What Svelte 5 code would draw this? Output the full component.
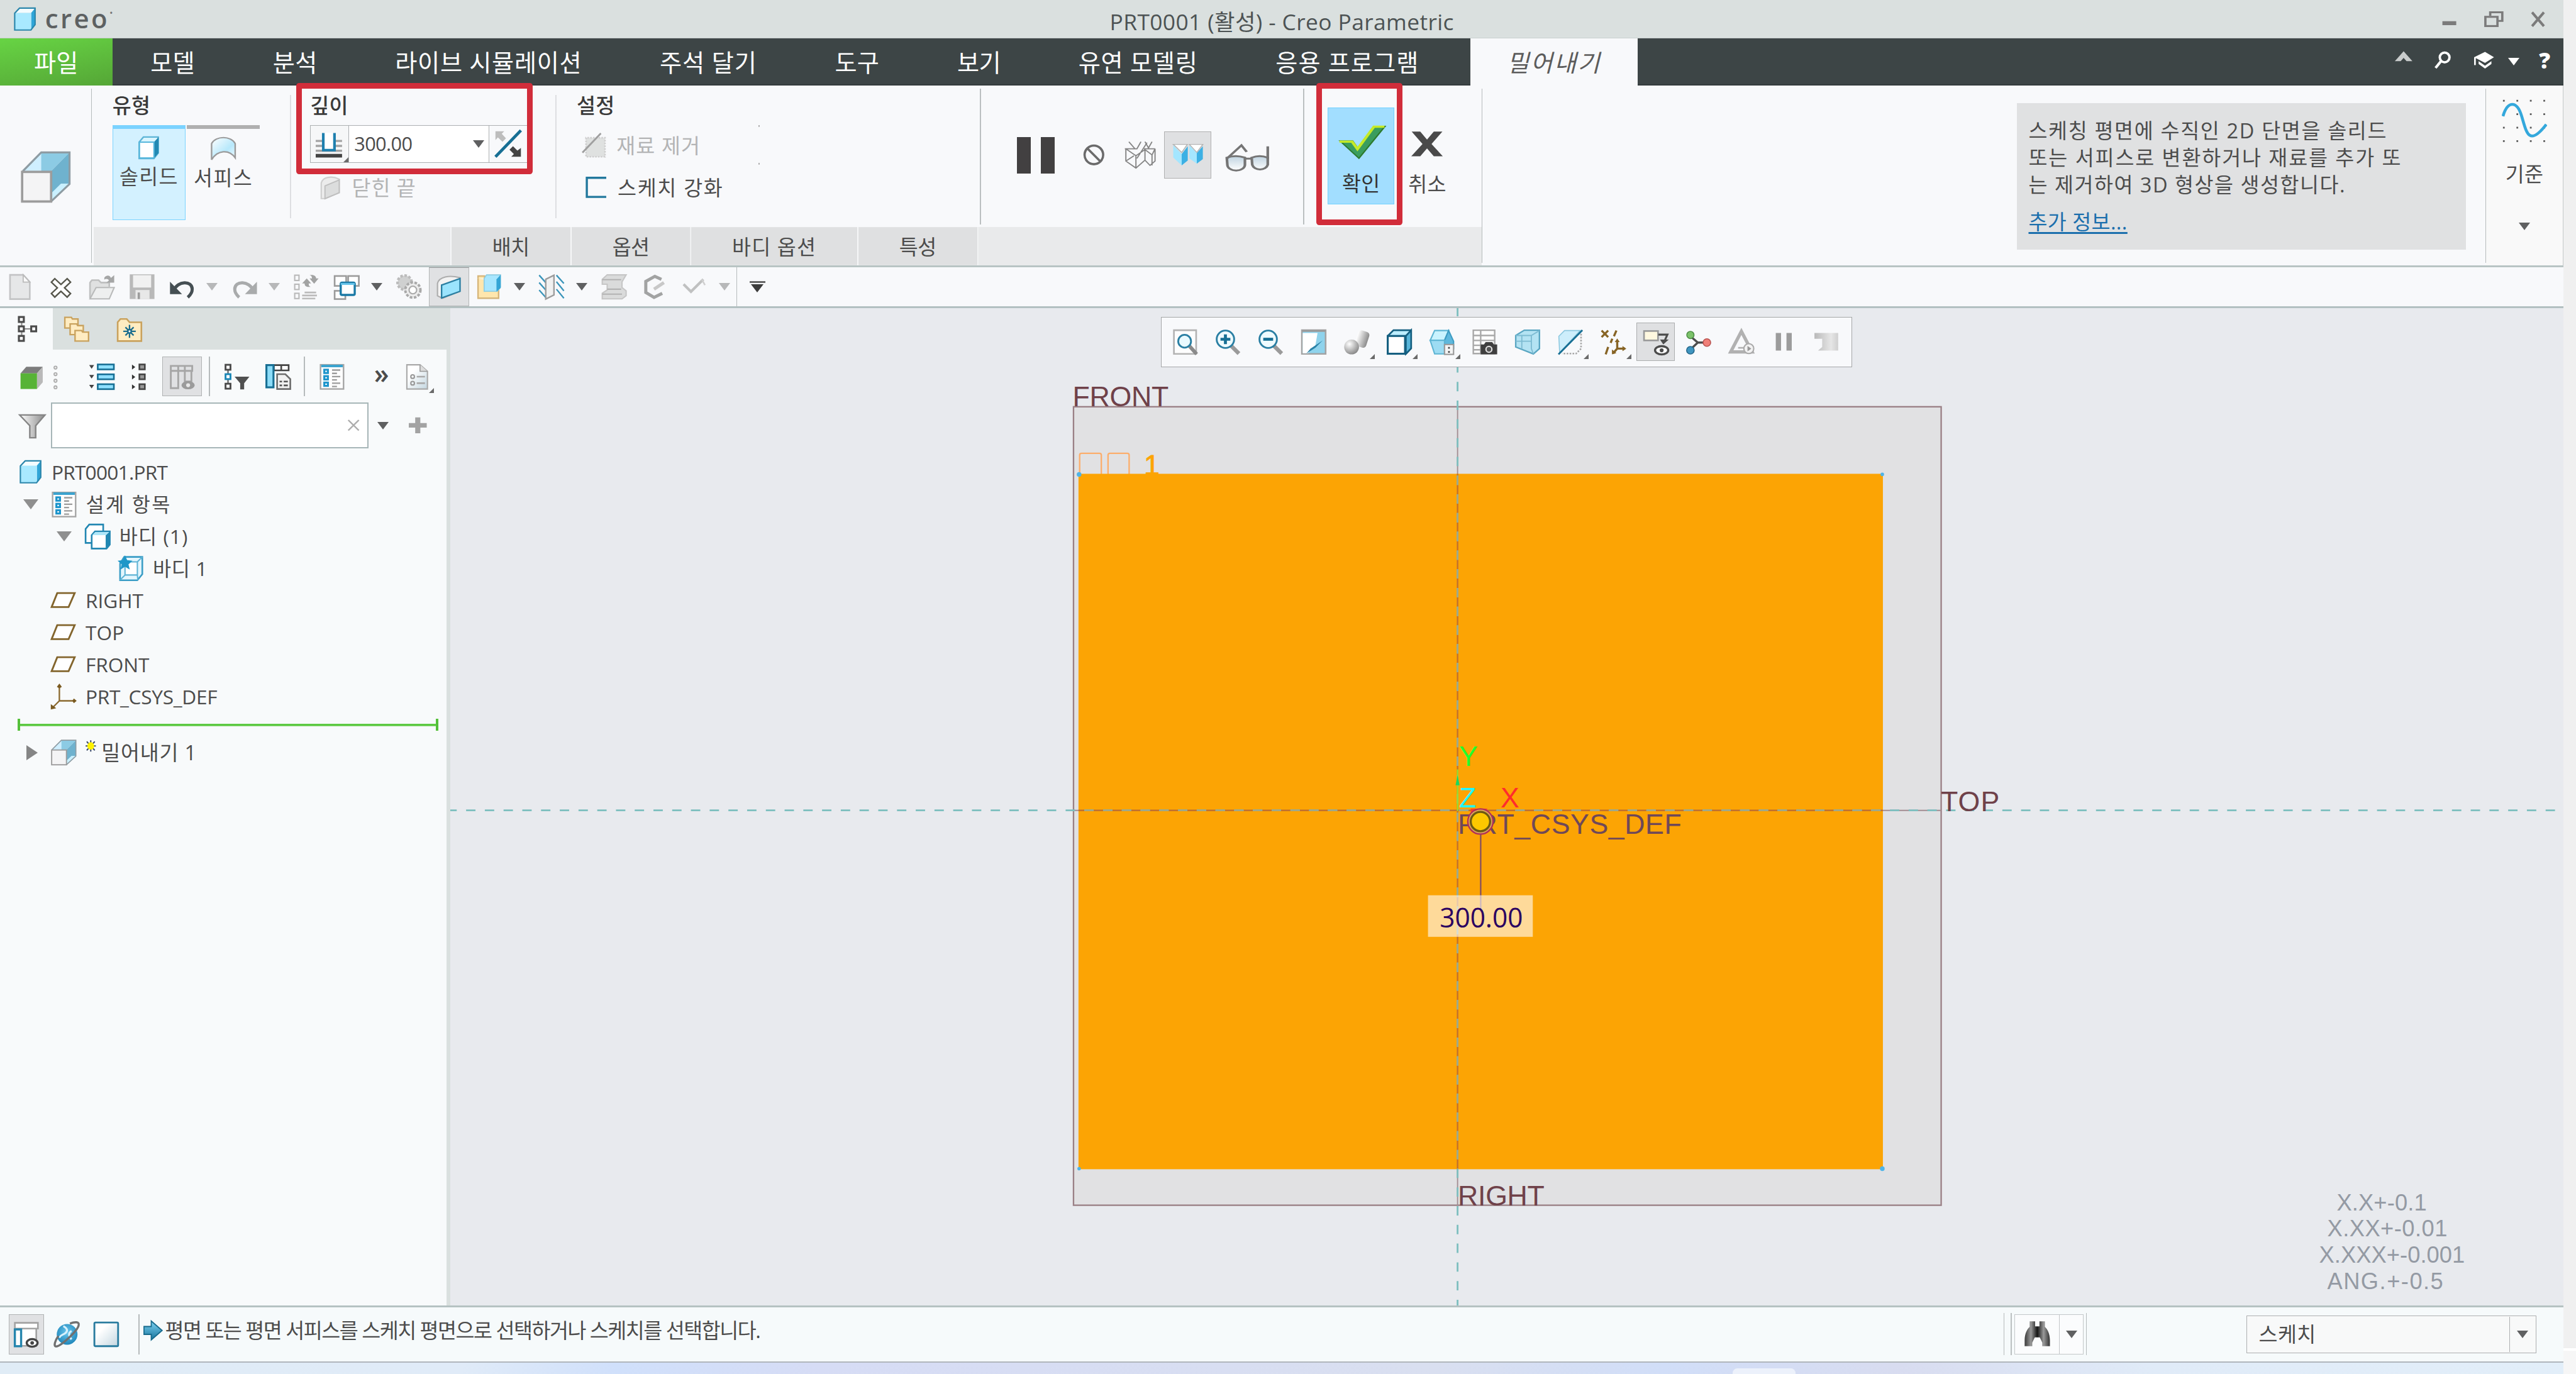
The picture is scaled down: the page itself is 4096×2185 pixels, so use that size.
<script>
  const BASE_WIDTH = 4400;

  function fit(node, width) {
    const root = node.closest('.app');
    const scale = root.getBoundingClientRect().width / BASE_WIDTH;
    const natural = node.getBoundingClientRect().width / scale;
    const count = [...node.textContent].length;
    node.style.letterSpacing = (width - natural) / count + 'px';
  }

  const menus = [
    { t: '모델', w: 76 },
    { t: '분석', w: 76 },
    { t: '라이브 시뮬레이션', w: 319 },
    { t: '주석 달기', w: 166 },
    { t: '도구', w: 76 },
    { t: '보기', w: 74 },
    { t: '유연 모델링', w: 204 },
    { t: '응용 프로그램', w: 245 }
  ];

  const panelTabs = [
    { t: '배치', c: 'tab', w: 63 },
    { t: '옵션', c: 'tab', w: 63 },
    { t: '바디 옵션', c: 'tab wide', w: 144 },
    { t: '특성', c: 'tab', w: 63 }
  ];

  const quick = [
    'newdoc', 'xclose', 'open', 'save', 'undo', '-off', 'redo', '-off', 'regen', 'windows', '-on',
    'gears', '*shade', 'foldercube', '-on', 'planes', '-on', 'book', 'hexc', 'tick', '-off'
  ];

  const viewTools = [
    { i: 'refit' }, { i: 'zoomin' }, { i: 'zoomout' }, { i: 'repaint' },
    { i: 'render', m: true }, { i: 'style', m: true }, { i: 'orient', m: true },
    { i: 'camera' }, { i: 'persp' }, { i: 'section', m: true }, { i: 'datum', m: true },
    { i: 'annot', on: true }, { i: 'spin' }, { i: 'simtri' }, { i: 'pausegray' }, { i: 'playback' }
  ];

  const tree = [
    { t: 'PRT0001.PRT', icon: 'part', level: 0, w: 198 },
    { t: '설계 항목', icon: 'list', level: 1, open: true, w: 146 },
    { t: '바디 (1)', icon: 'bodies', level: 2, open: true, w: 118 },
    { t: '바디 1', icon: 'body', level: 3, w: 94 },
    { t: 'RIGHT', icon: 'plane', level: 1, w: 99 },
    { t: 'TOP', icon: 'plane', level: 1, w: 66 },
    { t: 'FRONT', icon: 'plane', level: 1, w: 109 },
    { t: 'PRT_CSYS_DEF', icon: 'csys', level: 1, w: 225 }
  ];

  const help = [
    { t: '스케칭 평면에 수직인 2D 단면을 솔리드', w: 613 },
    { t: '또는 서피스로 변환하거나 재료를 추가 또', w: 638 },
    { t: '는 제거하여 3D 형상을 생성합니다.', w: 542 }
  ];

  const squares = (x, c, f) => [1, 6.5, 12].map((y) => `<rect x="${x}" y="${y}" width="2.6" height="3.2" fill="${f}" stroke="${c}" stroke-width=".8"/>`).join('');

  const icons = {
    part: '<path d="M1.5 4 4.5.8h10L12 4z" fill="#f3fcff"/><path d="M12 4 14.6.8v11L12 15.2z" fill="#2fa5d8"/><rect x="1.2" y="4" width="10.8" height="11.2" fill="#a9e9ff"/><path d="M1 4.2 4.2.8h10.4v11l-2.8 3.6H1z" fill="none" stroke="#2b86ab" stroke-width=".9"/>',
    extrude: '<path d="M1 6.4 6.6.8h8.6L9.6 6.4z" fill="#8ccbe4"/><path d="M1 6.4 6.6.8v5.6z" fill="#cfefff"/><path d="M9.6 6.4 15.2.8v9.4L9.6 15.4z" fill="#6fb2ce"/><path d="M9.6 15.4V13l3-2.9h2.6z" fill="#c9f0ff"/><path d="M1 6.4 6.6.8h8.6v9.4l-5.6 5.2" fill="none" stroke="#8e9ca3" stroke-width=".6"/><rect x=".8" y="6.6" width="8.8" height="8.8" fill="#f4f4f5" stroke="#9c9c9c" stroke-width=".7"/>',
    solid: '<path d="M2 4.6 4.6 1.5h9v9.7L11 14.5H2z" fill="#d9f5ff" stroke="#5cb4d6" stroke-width=".9"/><path d="M11 4.6 13.8 1.5v9.7L11 14.4z" fill="#2289b3"/><rect x="2.2" y="4.6" width="8.8" height="9.6" fill="#fff" stroke="#58b8dd" stroke-width=".8"/>',
    surface: '<path d="M1.8 5C4 .2 12 .2 14.2 5v8.4C11 8.4 5 8.6 1.8 14.6z" fill="url(#gBlue)" stroke="#9a9a9a" stroke-width=".8"/>',
    blind: '<path d="M0 5h16M0 8h16M0 11h16" stroke="#a4a4a4" stroke-width="1.3"/><rect x="4.5" y="0" width="7" height="10.5" fill="#fff"/><path d="M4.6.2v10.4h6.8V.2" fill="none" stroke="#1e7fae" stroke-width="1.6"/><path d="M0 14h16" stroke="#434343" stroke-width="2.2"/>',
    flip: '<path d="M15.5.5 1 15.5" stroke="#176f94" stroke-width="1.7"/><path d="M1 1h5L4.6 2.4 7 5 5 7 2.400 4.500 1 6z" fill="#bdbdbd"/><path d="M15.500 15.500h-5.500l1.500-1.500L9 11.500l2-2 2.500 2.500 2-1.500z" fill="#444"/>',
    capped: '<path d="M2 5C3 1 9 0 14 2.500v9L4.500 15.400H2z" fill="#ececec" stroke="#cfcfcf" stroke-width=".9"/><path d="M4.500 7 14 3v8.500l-9.500 4z" fill="#dcdddd" stroke="#bfbfbf" stroke-width=".8"/>',
    remove: '<path d="M3 3.500V15h11.500V3.500z" fill="#dfe1e0" stroke="#cfcfcf" stroke-dasharray="1 .7"/><path d="M.8 12.500 12 .8" stroke="#9f9f9f" stroke-width="1.1"/>',
    thicken: '<path d="M14.500 2.200H2.700v11.600h11.800" fill="none" stroke="#22789d" stroke-width="1.3"/>',
    no: '<circle cx="8" cy="8" r="5.300" fill="none" stroke="#6b6b6b" stroke-width="1.300"/><path d="m4.300 4.300 7.400 7.400" stroke="#6b6b6b" stroke-width="1.300"/>',
    wire: '<g fill="none" stroke="#858585" stroke-width=".6"><path d="M.5 4.500h6l2-4M10 4.500h5.500M1 4.500v7l5 4 4.500-4.500V5L6 8.500 1 4.500M6 8.500v7M10.500 5 14 8l1.500-3.500v7L13 14l-2.500-3M14 8v6M2.500.5l3 4M10.500.5l2 4M14 .5l-2 4M6.500 10l5-9M1 11.500l4-3"/></g>',
    prev: '<path d="M.8 2h7L5 6.600z" fill="#fff" stroke="#b5b5b5" stroke-width=".5"/><path d="M8.800 2h6.700L12.500 6.600z" fill="#fff" stroke="#b5b5b5" stroke-width=".5"/><path d="M.8 2.500 5 7.500V14L.8 9.500z" fill="#a4e6ff"/><path d="M5 7.500 8 3v8.200L5 14z" fill="#3cb0e4"/><path d="M8.800 2.500 12.500 7v6L8.800 10z" fill="#a4e6ff"/><path d="M12.500 7 15.500 3v7.400l-3 2.600z" fill="#3cb0e4"/>',
    glasses: '<g fill="url(#gGlass)" stroke="#757575" stroke-width=".9"><path d="M1 8.500q3-1.500 6.200 0v3.500a3 2.800 0 0 1-6 0zM9.500 8.500q2.700-1.500 5.500 0v3.500a2.700 2.800 0 0 1-5.300 0z"/></g><path d="M1 9 6 2.500l1.800 3.200M7.300 9h2.200M15 9V3" fill="none" stroke="#757575" stroke-width=".9"/>',
    check: '<path d="M1 7.500h4.200L7 11 12.500.8H16L7.300 15.400z" fill="#3a9d5e" stroke="#2c7a2c" stroke-width=".5"/><path d="M.8 7.800h4.200l1.800 3.400L12.300 1h3.500" fill="none" stroke="#c5ea27" stroke-width="1"/>',
    cancel: '<path d="M.5.5h4.200L8 5.300 11.300.500h4.200L10.200 8l5.500 7.500h-4.400L8 10.700 4.700 15.500H.3L5.800 8z" fill="#4a4a4a"/>',
    newdoc: '<path d="M1.500.8h8l4 4.400v10.300h-12z" fill="#e6e7e8" stroke="#c3c4c5"/><path d="M9.500.8v4.400h4z" fill="#fafafa" stroke="#bbb" stroke-width=".7"/>',
    xclose: '<path d="m4.300 5.200 7.400 7M11.700 5.200l-7.400 7" stroke="#56564c" stroke-width="3.900" stroke-linecap="square"/><path d="m4.300 5.200 7.400 7M11.700 5.200l-7.400 7" stroke="#fff" stroke-width="2.100" stroke-linecap="square"/>',
    open: '<path d="M.8 15V5.500L2 4h4l1.500 1.500h5V8" fill="#e0e1e1" stroke="#bfc0c0"/><path d="M.8 15.400 4.500 8.500h11l-3 6.900z" fill="#eeefef" stroke="#b9baba" stroke-width=".8"/><path d="M9.500 2.500c1.500-2 3.500-1.500 4 .2L15.500 1v4.500h-4.800l1.600-1.300c-.6-1-1.800-1.200-2.800-.5z" fill="#a5a6a6"/>',
    save: '<path d="M.5.5h15v15h-15z" fill="#b9b9b9"/><path d="M2.500 1h11v7.500h-11z" fill="#f1f1f1"/><path d="M4 10h8.500v5.500H4z" fill="#e8e8e8"/><path d="M6 11.500v4" stroke="#9c9c9c" stroke-width="1.400"/>',
    undo: '<path d="M3 10c2-5.500 11-6 11-.5 0 2-1 3.500-2.700 5" fill="none" stroke="#454f53" stroke-width="1.900"/><path d="M.5 5v7.500h7.300z" fill="#454f53"/>',
    redo: '<path d="M13 10c-2-5.500-11-6-11-.5 0 2 1 3.500 2.700 5" fill="none" stroke="#a9abac" stroke-width="1.900"/><path d="M15.500 5v7.500H8.200z" fill="#a9abac"/>',
    regen: squares(1, '#b9b9b9', 'none') + '<path d="M7 11.500h7M5.500 13.300h9M5.500 15.200h8" stroke="#bbb"/><path d="M5.500 6 8.300 3l2.700 3H9.500c0 1.500.5 2 1.500 2-2.500.5-4-.2-4-2zM10 3h1.500c0-1.200-.5-1.800-1.500-2 2.500-.5 4 .5 4 2h1.500L12.800 6.200z" fill="#a2a3a3"/>',
    windows: '<g fill="#fff" stroke="#9b9b9b"><rect x=".8" y="1.500" width="7" height="6"/><rect x="9" y="1.500" width="6.500" height="6"/><rect x=".8" y="10.500" width="6.500" height="5"/></g><rect x="4.500" y="5.500" width="8.500" height="7.500" rx=".8" fill="#fff" stroke="#1b7aa6" stroke-width="1.300"/><path d="M4.500 6.300h8.500" stroke="#65c3ea" stroke-width="1.200"/>',
    gears: '<circle cx="5.500" cy="5.500" r="4.300" fill="#cfd0d0" stroke="#bbb" stroke-width="1.600" stroke-dasharray="1.500 1"/><circle cx="10.500" cy="10" r="4.600" fill="#ececec" stroke="#a9a9a9" stroke-width="1.500" stroke-dasharray="1.600 .9"/><circle cx="10.500" cy="10" r="2.300" fill="#fff" stroke="#aaa" stroke-width=".8"/>',
    shade: '<path d="M1 13.500V6C2 2 8 .8 14.500 2.500v8.300L4 15z" fill="#f2f2f2" stroke="#acacac" stroke-width=".8"/><path d="M3.500 7 14.700 3v7.800L3.500 14.800z" fill="#9be4fd" stroke="#2b7fa2" stroke-width=".9"/>',
    foldercube: '<path d="M.8 3V15h12.500V5" fill="#ffe6ad" stroke="#d6b57a" stroke-width=".9"/><path d="M.8 3V1.500h4V3" fill="#ffe6ad" stroke="#d6b57a" stroke-width=".9"/><path d="M4.500 3 6 .8h8.500v7.500l-2 2.500h-8z" fill="#a8e6fe" stroke="#8ccbe0" stroke-width=".6"/><path d="M12 3.500 14.500.8v8L12 11z" fill="#35a5d6"/>',
    planes: '<path d="m.5 1 4 4.500m-4 0 4 4.500m-4 0 4 4.500M11 1l4.500 5M11 5l4.500 5.500M11 9.500l4.500 5.500" stroke="#3b95ba" stroke-width=".9"/><path d="m4.500 3.500 5-2.500v12l-5 2.500z" fill="#f1f1f1" stroke="#9c9c9c" stroke-width=".9"/>',
    book: '<path d="M1 3.500 4 .8h11.500L13 5v3.500l2.500 2v3L13 15.400H1V12l3-2V6.500H1z" fill="#dadbdb" stroke="#c6c6c6" stroke-width=".8"/><path d="M1 3.700h11.500M4 9.500h8.500M1 12.500h12" stroke="#b2b2b2" stroke-width=".8"/>',
    hexc: '<path d="M12.500 3.500 8.500 1.700 3 4.800v6.700l5 3 5-2.500" fill="none" stroke="#a2a3a3" stroke-width="1.900"/><path d="m8 9.500 6-4" stroke="#c8c8c8" stroke-width="2"/>',
    tick: '<path d="M1.500 6.500 6 11l7.500-7.500" fill="none" stroke="#c0c1c1" stroke-width="1.600"/><path d="M12.500 3.500 14.500 7" stroke="#d0d0d0"/>',
    tabtree: '<path d="M4 3v10M4 8h6" stroke="#8a8a8a" stroke-width=".8"/><g fill="#fff" stroke="#4b4b4b" stroke-width="1.200"><rect x="2.300" y=".8" width="3" height="3"/><rect x="2.300" y="6.500" width="3" height="3"/><rect x="9.800" y="6.500" width="3" height="3"/><rect x="2.300" y="12.300" width="3" height="3"/></g>',
    folders: '<g fill="#ffecc2" stroke="#c9a25e" stroke-width=".9"><path d="M.8 1h4l.6 1h3.400v5.500h-8z"/><path d="M4 5h4l.6 1h3.400v5.500H4z"/><path d="M7 9h4l.6 1h3.600v5.400H7z"/></g>',
    favfolder: '<path d="M.8 4 2.500 2h3.800L8 4h7.200v11.400H.8z" fill="#ffecc2" stroke="#c9a25e"/><path d="M8 5.500v8M4.200 9.500h7.600M5.500 7l5 5M10.500 7l-5 5" stroke="#1d6d8d" stroke-width=".9"/><circle cx="8" cy="9.500" r="1.100" fill="#fff" stroke="#1d6d8d"/>',
    greencube: '<path d="M1 6 4.500 2h10L11 6z" fill="#7c7c7c"/><path d="M11 6 14.500 2v9.500L11 15.500z" fill="#b9b9b9"/><rect x="1" y="6" width="10" height="9.500" fill="#57b336"/>',
    dots: '<g fill="#e9e9e9" stroke="#a8a8a8" stroke-width=".6"><circle cx="2" cy="2.500" r=".9"/><circle cx="2" cy="6.500" r=".9"/><circle cx="2" cy="10.500" r=".9"/><circle cx="2" cy="14.500" r=".9"/></g>',
    expand: [1, 7, 13].map((y) => `<path d="M.3 ${y}h3L1.800 ${y + 2.2}z" fill="#454545"/><rect x="5.500" y="${y - 0.4}" width="9.800" height="3" fill="#8fe0ff" stroke="#176f94" stroke-width="1"/>`).join(''),
    collapse: [1, 7, 13].map((y) => `<path d="M3 ${y - 0.3}v3L5 ${y + 1.2}z" fill="#333"/><rect x="7.500" y="${y - 0.4}" width="3.300" height="3" fill="#989898" stroke="#444" stroke-width="1"/>`).join(''),
    coltoggle: '<path d="M1 1.500h13v3H1zM1 4.500h4.500V15H1zM5.500 4.500V12M9.500 1.500V11h4V4.500M5.500 1.500v3" fill="none" stroke="#a6a6a6" stroke-width="1.100"/><ellipse cx="11.500" cy="13.200" rx="4" ry="2.500" fill="#9b9b9b"/><circle cx="11.500" cy="13.200" r="1.200" fill="#e8e8e8"/>',
    treefilter: '<path d="M2.500 3v10" stroke="#777"/><g fill="#fff" stroke="#4b4b4b" stroke-width="1.100"><rect x="1" y=".8" width="3" height="3"/><rect x="1" y="6.500" width="3" height="3" stroke="#1a86b5"/><rect x="1" y="12.300" width="3" height="3"/></g><path d="M6.500 8h9l-3.200 4v3.800h-2.400V12z" fill="#505050"/>',
    treecols: '<path d="M1 1h13.500v3.200H1z" fill="#fff" stroke="#444"/><path d="M5.500 1v3M10 1v3" stroke="#444"/><rect x="1" y="1" width="4.300" height="13.500" fill="#8cdcf8" stroke="#176f94" stroke-width="1.200"/><path d="M7.500 6.500h5l3 3v6h-8z" fill="#f1f1f1" stroke="#6d6d6d"/><path d="M9 11h1.500m1 0H14M9 13.300h1.500m1 0H14" stroke="#555"/>',
    list: '<rect x="1" y=".8" width="14" height="14.700" fill="#fdfdfd" stroke="#a5a5a5" stroke-width=".9"/><path d="M1.500 1.500h13" stroke="#3ba3cf" stroke-width="1.500"/><g fill="#fff" stroke="#1d95cc" stroke-width="1.200"><rect x="3.300" y="3.800" width="2.200" height="2"/><rect x="3.300" y="7.700" width="2.200" height="2"/><rect x="3.300" y="11.600" width="2.200" height="2"/></g><path d="M8 4h5M8 6h3M8 8h5M8 10h3M8 12h5M8 14h3" stroke="#9c9c9c" stroke-width=".9"/>',
    docopts: '<path d="M1.500.8h8l4.500 4v10.700H1.500z" fill="url(#gDoc)" stroke="#a9a9a9" stroke-width=".8"/><path d="M9.500.8v4H14" fill="#ddd" stroke="#999" stroke-width=".6"/><path d="M7.500 8h5M7.500 12h5" stroke="#aaa"/><circle cx="5" cy="8" r="1.100" fill="none" stroke="#999" stroke-width=".8"/><circle cx="5" cy="12" r="1.100" fill="none" stroke="#999" stroke-width=".8"/>',
    funnel: '<path d="M.5 1.500h15L10 8v7.300H6.500V8z" fill="url(#gGray)" stroke="#858585" stroke-width=".9"/>',
    bodies: '<path d="M.8 3.500 3 .8h8.500V9L9.500 12H.8z" fill="#fff" stroke="#2287b2"/><path d="M4.500 7.300 6.500 5h9v8L13.500 15.400h-9z" fill="#fff" stroke="#2287b2"/><path d="M13 7.300 15.500 5v8L13 15.200z" fill="#2187b2"/><path d="M4.800 7.300 6.700 5.300h8.500l-2 2z" fill="#aee6f8"/>',
    body: '<path d="M1.500 5 4 1h11v10.500L12 15.200H1.500z" fill="#e3f6fd" stroke="#3a9dc6"/><path d="M4.500 4H12v8H4.500zM12 4l3-3M12 12l.3 3M4.500 12l-3 3" fill="#fff" stroke="#5fb4d5" stroke-width=".8"/><path d="m4.500 0 1.300 3 3.200.3-2.400 2.200.8 3.200-2.900-1.700-2.800 1.700.8-3.200L0 3.300 3.200 3z" fill="#1f97c8"/>',
    plane: '<path d="M4.200 3.500h10.600l-3.700 8.500H.8z" fill="#fff" stroke="#83652d" stroke-width="1.100"/>',
    csys: '<path d="M5.500 2v8.500H15M5.500 10.500 1.500 14.500" fill="none" stroke="#8b6a30" stroke-width=".9"/><path d="M5.500 0 7 2 5.500 3 4 2zM16 10.500l-1.700 1.400-.9-1.400.9-1.400zM.3 15.800v-3.300l3.300 2.500z" fill="#7a5a20"/>',
    refit: '<path d="M1 .8h13.500v14.400H1z" fill="#fdfdfd" stroke="#b3b3b3"/><path d="m10.500 10.500 4.300 4.800" stroke="#8a8a8a" stroke-width="2.200"/><circle cx="7.500" cy="7.500" r="3.900" fill="#eafaff" stroke="#2a7fa3" stroke-width="1.100"/>',
    zoomin: '<path d="m9.500 10 5 5" stroke="#9a9a9a" stroke-width="2.400"/><circle cx="6.300" cy="6.300" r="5.300" fill="#effbff" stroke="#2a7fa3" stroke-width="1.100"/><path d="M6.300 3.300v6M3.300 6.300h6" stroke="#176f94" stroke-width="1.800"/>',
    zoomout: '<path d="m9.500 10 5 5" stroke="#9a9a9a" stroke-width="2.400"/><circle cx="6.300" cy="6.300" r="5.300" fill="#effbff" stroke="#2a7fa3" stroke-width="1.100"/><path d="M3.300 6.300h6" stroke="#176f94" stroke-width="1.800"/>',
    repaint: '<path d="M.8.800h14.400v14.400H.8z" fill="#8fd3ec" stroke="#a4a4a4"/><path d="M1.300 2.500h9L9 10l-4.500 4.800H1.300z" fill="#fff"/><path d="M1 1.200h14" stroke="#9b9b9b" stroke-width="1.300"/><path d="M13.500 7 9 11.500 3.500 15l2.500-3z" fill="#2b83a8"/>',
    render: '<rect x="8" y="1" width="7" height="10" rx="2" fill="url(#gGray)" transform="rotate(18 11 6)"/><circle cx="5" cy="11" r="4.500" fill="url(#gBall)"/>',
    style: '<path d="M1 4.300 4.500.8h10.700v11L12 15.200H1z" fill="#bdeeff" stroke="#155f80"/><path d="M12 4.300 15.200.8v11L12 15.200z" fill="#57b5da" stroke="#155f80"/><rect x="1" y="4.300" width="10.500" height="10.800" fill="#fff" stroke="#155f80" stroke-width="1.200"/>',
    orient: '<path d="M3.500 1h8.500L9.500 7H.8z" fill="#c9f3ff" stroke="#5db4d3" stroke-width=".8"/><path d="M12 1l3 6.500V12H9.500V7z" fill="#5eb8dd" stroke="#3d9cc2" stroke-width=".8"/><path d="M.8 7h8.700v8.200H3.500z" fill="#9ddcf3" stroke="#5db4d3" stroke-width=".8"/><rect x="9.500" y="9.500" width="5.500" height="6" fill="#f4f4f4" stroke="#999" stroke-width=".8"/><path d="M12.200 11v1m0 1.500v1" stroke="#444"/>',
    camera: '<path d="M1 .8h13V15H1zM1 4h13M1 7h13M1 10h13M1 12.700h13M5.500 1v14" fill="#fdfdfd" stroke="#a8a8a8" stroke-width=".9"/><path d="M5.500 9.500h2l1-1.500h4l1 1.500h2v6h-10z" fill="#3f3f3f"/><circle cx="10.500" cy="12.400" r="1.800" fill="#555" stroke="#e3e3e3" stroke-width=".8"/>',
    persp: '<path d="M.8 4 6 .8h9.200V12L11.500 15.200.8 11z" fill="#b4e3f3" stroke="#5aa6c2" stroke-width=".9"/><path d="M.8 4h9.500v8M10.300 4l5-3M10.300 12l1.200 3.200M4.500 4v8.300M.8 7.500h9.500" fill="none" stroke="#7dbbd2" stroke-width=".7"/>',
    section: '<path d="M1 4.500 4.500 1H14L1.500 14.500z" fill="#cdeefb" stroke="#8cc8df" stroke-width=".6"/><path d="M14.500 3v9l-3 3H3" fill="none" stroke="#a8a8a8" stroke-dasharray="1 .8"/><path d="M.8 15.500 15.300.8" stroke="#176f94" stroke-width="1.100"/>',
    datum: '<g fill="none" stroke="#876425" stroke-width="1.300"><path d="m1 1 4 4M5 1 1 5M10 1 8.500 4.500M7.500 6l-1 2.500M5 11l-1.500 4.500M10.500 7v5h4.800M10.500 12 8 14.800"/></g><path d="M10.500 5.800 12 8H9zM16 12l-2.300 1.600v-3.200zM7.300 15.500v-3l2.700 2.200z" fill="#876425"/>',
    annot: '<rect x=".8" y="1.300" width="8.500" height="5.700" fill="#fff8df" stroke="#999"/><path d="M9.500 3.500h5.500L13 8" fill="none" stroke="#4c4c4c" stroke-width="1.200"/><path d="M10.500 6.500h5.300L12.500 9.500z" fill="#4c4c4c"/><ellipse cx="11.500" cy="13" rx="4" ry="2.500" fill="#fff" stroke="#4c4c4c" stroke-width="1.300"/><circle cx="11.500" cy="13" r="1.200" fill="#4c4c4c"/>',
    spin: '<path d="M3 4.500 7.500 8.300H13M7.500 8.300 3 12.500" fill="none" stroke="#4d4d4d" stroke-width="1.300"/><circle cx="3" cy="3.700" r="2.200" fill="#7cc26a" stroke="#4d8d45" stroke-width=".6"/><circle cx="13" cy="8.300" r="2.300" fill="#f08079" stroke="#b9524f" stroke-width=".6"/><circle cx="3" cy="13" r="2.300" fill="#3f95c0" stroke="#25678a" stroke-width=".6"/>',
    simtri: '<path d="M8 1.500 14.500 14H1.500z" fill="none" stroke="#b1b1b1" stroke-width="2"/><path d="M6 11.500h5" stroke="#b1b1b1"/><circle cx="12.500" cy="12" r="3" fill="#f2f2f2" stroke="#aaa" stroke-width=".8"/><path d="m11.700 10.300 2.300 1.700-2.300 1.700z" fill="#999"/>',
    pausegray: '<path d="M4.500 2.500v10.700M11 2.500v10.700" stroke="#9c9c9c" stroke-width="3.200"/>',
    playback: '<path d="M.8 2.500h14.400v10.700H3L5.500 11V6H.8z" fill="url(#gPlay)"/>',
    layout: '<path d="M1 1h14v3.500H1zM1 4.500h13v10.500H1z" fill="#fff" stroke="#a3a3a3"/><rect x="1" y="5" width="3.800" height="10.200" fill="#fff" stroke="#2585ad" stroke-width="1.300"/><ellipse cx="11.500" cy="13.200" rx="3.300" ry="2.300" fill="#fff" stroke="#444" stroke-width="1.300"/><circle cx="11.500" cy="13.200" r="1.100" fill="#444"/>',
    globe: '<circle cx="8.300" cy="8" r="6.300" fill="url(#gGlobe)"/><path d="M6 3c2 1 3 2.500 1.500 4S4.500 8 3.500 10M11 6c-2 1-2 3 0 5" fill="none" stroke="#d7f1fc" stroke-width="1.200"/><path d="M10 1.500C13 .2 16 .3 15.300 2.500 14.500 6 4 15.800 1.300 15.300.2 15 .8 12 3 9" fill="none" stroke="#707070" stroke-width="1.300"/>',
    square: '<rect x=".8" y=".8" width="14.400" height="14.400" rx=".6" fill="url(#gDoc)" stroke="#2a7c9f" stroke-width="1.100"/>',
    arrow: '<path d="M.5 5h6V.8L15.500 8 6.500 15.200V11h-6z" fill="url(#gArrow)" stroke="#176a8c" stroke-width=".9"/>',
    binoc: '<path d="M3.500.5h3.200v3h2.600v-3h3.200v3.200c1.500 1.300 3 4 3 8v3.500h-4.500v-2L9.500 10h-3L5 13.200v2H.5v-3.500c0-4 1.500-6.700 3-8z" fill="url(#gBin)"/>',
    up: '<path d="M.5 15.500 8 .5l7.500 15h-5L8 10.500l-2.500 5z" fill="#c9cccc"/>',
    search: '<circle cx="9.500" cy="5.700" r="4.300" fill="none" stroke="#fff" stroke-width="2.100"/><path d="M6.300 9 1.500 15" stroke="#fff" stroke-width="2.300"/>',
    hat: '<path d="M.5 5.500 9 .8l7 4.700-7 5zM4 9l5 4 5-4v2.500L9 15.500l-5-4zM.5 5.500h1.300v7H.5z" fill="#fff"/>',
    min: '<path d="M1 12h14" stroke="#7b7b7b" stroke-width="4"/>',
    restore: '<path d="M5 5V1.500h10V10h-3.500" fill="none" stroke="#7b7b7b" stroke-width="1.900"/><rect x="1" y="6" width="10" height="9" fill="none" stroke="#7b7b7b" stroke-width="1.900"/>',
    winx: '<path d="m2 1 12 14M14 1 2 15" stroke="#7b7b7b" stroke-width="2.600"/>',
    clearx: '<path d="m2 1.500 12 13M14 1.500l-12 13" stroke="#adadad" stroke-width="1.800"/>',
    plus: '<path d="M8 1v14M1 8h14" stroke="#a3a3a3" stroke-width="4"/>',
    newstar: '<path d="M8 1v14M1 8h14M2.500 2.500l11 11M13.500 2.500l-11 11" stroke="#3b4a63" stroke-width="1.700"/><circle cx="8" cy="8" r="4.600" fill="#fff200"/>'
  };

  const dotGrid = [0, 1, 2, 3].flatMap((r) => [0, 1, 2, 3].map((c) => ({ x: 2 + c * 23, y: 3 + r * 23 })));
</script>

{#snippet icon(name, size = 's45')}
  <svg class="ic {size}" viewBox="0 0 16 16" fill="none" preserveAspectRatio="none">{@html icons[name]}</svg>
{/snippet}

<div class="app">
  <svg class="defs" aria-hidden="true">
    <defs>
      <linearGradient id="gBlue" x1="0" y1="0" x2="1" y2="1"><stop offset="0" stop-color="#fff" /><stop offset=".6" stop-color="#b7e8fb" /><stop offset="1" stop-color="#f4fcff" /></linearGradient>
      <linearGradient id="gGlass" x1="0" y1="0" x2="0" y2="1"><stop offset="0" stop-color="#bfd3e0" /><stop offset="1" stop-color="#fff" /></linearGradient>
      <linearGradient id="gGray" x1="0" y1="0" x2="1" y2="0"><stop offset="0" stop-color="#fff" /><stop offset="1" stop-color="#8b8b8b" /></linearGradient>
      <linearGradient id="gDoc" x1="0" y1="0" x2="1" y2="1"><stop offset=".3" stop-color="#fff" /><stop offset="1" stop-color="#c3d6e0" /></linearGradient>
      <linearGradient id="gPlay" x1="0" y1="0" x2="1" y2="0"><stop offset="0" stop-color="#b9b9b9" /><stop offset=".7" stop-color="#e6e6e6" /><stop offset="1" stop-color="#cfcfcf" /></linearGradient>
      <linearGradient id="gArrow" x1="0" y1="0" x2="0" y2="1"><stop offset="0" stop-color="#7fd4f4" /><stop offset="1" stop-color="#17739b" /></linearGradient>
      <linearGradient id="gBin" x1="0" y1="0" x2="1" y2="0"><stop offset="0" stop-color="#3a3a3a" /><stop offset=".25" stop-color="#999" /><stop offset=".5" stop-color="#151515" /><stop offset=".75" stop-color="#999" /><stop offset="1" stop-color="#333" /></linearGradient>
      <radialGradient id="gBall" cx=".35" cy=".3" r=".8"><stop offset="0" stop-color="#fff" /><stop offset="1" stop-color="#7d7d7d" /></radialGradient>
      <radialGradient id="gGlobe" cx=".5" cy=".4" r=".6"><stop offset="0" stop-color="#6cc8ef" /><stop offset="1" stop-color="#1e86ba" /></radialGradient>
    </defs>
  </svg>

  <div class="window">
    <header class="title">
      <div class="brand">{@render icon('part', 's41')}<span class="creo"><b use:fit={110}>creo</b><i>•</i></span></div>
      <div class="caption"><span use:fit={588}>PRT0001 (활성) - Creo Parametric</span></div>
      <div class="winbtns">{@render icon('min', 's27')}{@render icon('restore', 's32')}{@render icon('winx', 's27')}</div>
    </header>

    <nav class="menu">
      <div class="file"><span use:fit={76}>파일</span></div>
      {#each menus as m}
        <div class="item"><span use:fit={m.w}>{m.t}</span></div>
      {/each}
      <div class="current"><span use:fit={161}>밀어내기</span></div>
      <div class="tools">
        {@render icon('up', 'up')}{@render icon('search', 's30')}{@render icon('hat', 's34')}<i class="tri white"></i><b>?</b>
      </div>
    </nav>

    <section class="ribbon">
      <div class="feature">{@render icon('extrude', 's88')}</div>

      <div class="dash">
        <div class="groups">
          <div class="group type">
            <h4><span use:fit={65}>유형</span></h4>
            <div class="toggles">
              <div class="big on">{@render icon('solid')}<span use:fit={101}>솔리드</span></div>
              <div class="big">{@render icon('surface', 's52')}<span use:fit={101}>서피스</span></div>
            </div>
          </div>
          <div class="group depth">
            <h4><span use:fit={65}>깊이</span></h4>
            <div class="combo">
              <div class="kind">{@render icon('blind')}<i class="corner"></i></div>
              <div class="value"><span use:fit={99}>300.00</span><i class="tri"></i></div>
              <div class="flip">{@render icon('flip', 's48')}</div>
            </div>
            <div class="opt off closed">{@render icon('capped', 's41')}<span use:fit={110}>닫힌 끝</span></div>
          </div>
          <div class="group settings">
            <h4><span use:fit={65}>설정</span></h4>
            <div class="opt off cut">{@render icon('remove')}<span use:fit={144}>재료 제거</span></div>
            <div class="opt thick">{@render icon('thicken')}<span use:fit={181}>스케치 강화</span></div>
          </div>
          <div class="group controls">
            <div class="pause"><i></i><i></i></div>
            {@render icon('no', 's48 no')}
            {@render icon('wire', 's55')}
            <div class="preview">{@render icon('prev', 's55')}</div>
            {@render icon('glasses', 'glasses')}
          </div>
          <div class="group confirm">
            <div class="ok">{@render icon('check', 'check')}<span use:fit={65}>확인</span></div>
            <div class="cancel">{@render icon('cancel', 'cross')}<span use:fit={65}>취소</span></div>
          </div>
        </div>
        <div class="panels">
          {#each panelTabs as p}<div class={p.c}><span use:fit={p.w}>{p.t}</span></div>{/each}
        </div>
      </div>

      <div class="helparea">
        <div class="help">
          {#each help as h}<p><span use:fit={h.w}>{h.t}</span></p>{/each}
          <p class="more"><a href="#info" use:fit={169}>추가 정보...</a></p>
        </div>
      </div>

      <div class="datumcol">
        <svg class="sk" viewBox="0 0 78 78">
          {#each dotGrid as d}<rect x={d.x} y={d.y} width="3" height="3" fill="#5d5d5d" />{/each}
          <path d="M2 31C10 4 26 4 34 31S46 84 76 45" fill="none" stroke="#34a8dc" stroke-width="5" />
        </svg>
        <span use:fit={65}>기준</span>
        <i class="tri"></i>
      </div>
    </section>

    <div class="quick">
      {#each quick as q}
        {#if q[0] === '-'}
          <div class="drop"><i class="tri" class:pale={q === '-off'}></i></div>
        {:else}
          <div class="cell" class:on={q[0] === '*'}>{@render icon(q.replace('*', ''))}</div>
        {/if}
      {/each}
      <div class="overflow"><i class="bar"></i><i class="tri dark"></i></div>
    </div>

    <main>
      <aside>
        <div class="tabs">
          <div class="t first">{@render icon('tabtree')}</div>
          <div class="t">{@render icon('folders')}</div>
          <div class="t">{@render icon('favfolder')}</div>
        </div>
        <div class="body">
          <div class="treebar">
            {@render icon('greencube')}
            {@render icon('dots')}
            <div class="wide">{@render icon('expand')}</div>
            {@render icon('collapse')}
            <div class="tog">{@render icon('coltoggle')}</div>
            <i class="sep"></i>
            <div class="pad">{@render icon('treefilter')}</div>
            {@render icon('treecols')}
            <i class="sep s2"></i>
            <div class="pad p2">{@render icon('list')}</div>
            <b>»</b>
            <div class="opts">{@render icon('docopts')}<i class="corner"></i></div>
          </div>
          <div class="filter">
            {@render icon('funnel', 'fun')}
            <div class="search">{@render icon('clearx', 's24')}</div>
            <i class="tri"></i>
            {@render icon('plus', 's34')}
          </div>
          <ul>
            {#each tree as n}
              <li class="l{n.level}">
                {#if n.open}<i class="twist"></i>{/if}
                {@render icon(n.icon, n.level === 0 ? 's41' : 's45')}
                <span use:fit={n.w}>{n.t}</span>
              </li>
            {/each}
          </ul>
          <div class="insert"></div>
          <div class="pending">
            <i class="play"></i>{@render icon('extrude', 's46')}{@render icon('newstar', 's22')}
            <span use:fit={163}>밀어내기 1</span>
          </div>
        </div>
      </aside>

      <div class="stage">
        <svg class="scene" viewBox="769 526 3610 1704">
          <rect x="1833.500" y="694.500" width="1482" height="1364" fill="#e1e1e3" stroke="#9a8086" stroke-width="2.500" />
          <path class="ghost" d="M2489.500 696V2059M1834 1384H3315" />
          <g class="boxes"><rect x="1844" y="774" width="37" height="60" rx="3" /><rect x="1892.500" y="774" width="36" height="60" rx="3" /></g>
          <text class="lbl one" x="1954" y="811">1</text>
          <rect x="1842" y="809" width="1374" height="1188" fill="#fca404" />
          <path class="ghost hot" d="M2489.500 809V1997M1842 1384H3216" />
          <path class="axis" d="M2489.500 524V2231M764 1384H4379" />
          <path class="axis warm" d="M2489.500 812V1997M1852 1384H3216" />
          <g fill="#4fb4e8"><circle cx="1843" cy="810" r="4" /><circle cx="3215" cy="810" r="3" /><circle cx="1843" cy="1996" r="3" /><circle cx="3215" cy="1996" r="4" /></g>
          <text class="lbl" x="1832" y="694" textLength="164">FRONT</text>
          <text class="lbl" x="3315" y="1385" textLength="100">TOP</text>
          <text class="lbl" x="2490" y="2059" textLength="148">RIGHT</text>
          <path d="M2489.500 1314v71" stroke="#9be02c" stroke-width="2.500" />
          <path d="M2486 1341l3.500-17 3.500 17z" fill="#18d860" />
          <text class="lbl y" x="2492" y="1308">Y</text>
          <text class="lbl z" x="2492" y="1379">Z</text>
          <text class="lbl x" x="2563" y="1379">X</text>
          <text class="lbl csys" x="2490" y="1424" textLength="382">PRT_CSYS_DEF</text>
          <path d="M2512 1384h28" stroke="#ff3b2c" stroke-width="6" />
          <path d="M2529 1424V1558" stroke="#86505e" stroke-width="2.500" />
          <circle cx="2528.500" cy="1403" r="21.500" fill="#d9a35c" stroke="#b03058" stroke-width="2.500" />
          <circle cx="2528.500" cy="1403" r="16.500" fill="#fdc800" stroke="#6d5a12" stroke-width="3.500" />
          <rect x="2439" y="1529" width="179" height="71" fill="#fff" fill-opacity=".6" />
          <text class="dim" x="2459" y="1584" textLength="142" lengthAdjust="spacingAndGlyphs">300.00</text>
          <g class="tol">
            <text x="3991" y="2067" textLength="154">X.X+-0.1</text>
            <text x="3975" y="2112" textLength="205">X.XX+-0.01</text>
            <text x="3961" y="2157" textLength="249">X.XXX+-0.001</text>
            <text x="3975" y="2202" textLength="198">ANG.+-0.5</text>
          </g>
        </svg>
        <div class="float">
          {#each viewTools as v}
            <div class="vt" class:on={v.on}>{@render icon(v.i)}{#if v.m}<i class="corner"></i>{/if}</div>
          {/each}
        </div>
      </div>
    </main>

    <footer>
      <div class="st on">{@render icon('layout')}</div>
      <div class="st">{@render icon('globe')}</div>
      <div class="st">{@render icon('square')}</div>
      <i class="rule"></i>
      {@render icon('arrow', 'msgarrow')}
      <div class="msg"><span use:fit={1016}>평면 또는 평면 서피스를 스케치 평면으로 선택하거나 스케치를 선택합니다.</span></div>
      <div class="find">
        <div class="findbox"><div class="bin">{@render icon('binoc', 's46')}</div><div class="fa"><i class="tri"></i></div></div>
      </div>
      <div class="select"><span use:fit={98}>스케치</span><div class="sa"><i class="tri"></i></div></div>
    </footer>

    <div class="desktop"><i></i></div>

    <div class="mark depthmark"></div>
    <div class="mark okmark"></div>
  </div>
  <div class="edge"></div>
</div>

<style>
  :global(body) { background: #f0f0f0; overflow: hidden; }
  .app {
    zoom: 0.930909; width: 4400px; height: 2347px; display: flex; overflow: hidden;
    font: 400 35px/40px "Open Sans", "Noto Sans CJK KR", sans-serif; color: #4c4c4c; white-space: nowrap;
  }
  .app :global(*) { box-sizing: border-box; }
  .app i { font-style: normal; display: block; }
  .defs { position: absolute; width: 0; height: 0; }
  .window { position: relative; width: 4379px; display: flex; flex-direction: column; background: #f8f9fb; }
  .edge { flex: 1; background: linear-gradient(#f0f0f0 0 2303px, #fff 2303px 2307px, #f6f6f6 2307px); }

  .ic { display: block; flex: none; overflow: visible; }
  .s22 { width: 20px; height: 22px; } .s24 { width: 24px; height: 22px; } .s27 { width: 27px; height: 27px; }
  .s30 { width: 31px; height: 31px; } .s32 { width: 33px; height: 28px; } .s34 { width: 35px; height: 31px; }
  .s41 { width: 41px; height: 41px; } .s45 { width: 45px; height: 45px; } .s46 { width: 46px; height: 46px; }
  .s48 { width: 48px; height: 48px; } .s52 { width: 52px; height: 48px; } .s55 { width: 55px; height: 48px; }
  .s88 { width: 90px; height: 92px; }

  .tri { width: 0; height: 0; border: 10px solid transparent; border-top: 13px solid #5f6061; border-bottom: 0; flex: none; }
  .tri.pale { border-top-color: #b7b8b9; }
  .tri.white { border-top-color: #fff; }
  .tri.dark { border-top-color: #3c3c3c; }
  .corner { position: absolute; right: 0; bottom: 0; width: 0; height: 0; border-left: 9px solid transparent; border-bottom: 9px solid #6a6a6a; }

  .title { height: 66px; display: grid; grid-template-columns: 1fr auto 1fr; align-items: center; background: #dae0df; border-bottom: 2px solid #c9d0cf; }
  .brand { display: flex; align-items: center; padding-left: 23px; gap: 13px; }
  .creo { display: flex; }
  .creo b { font: 600 45px/60px "Open Sans", sans-serif; color: #5d6162; margin-top: -3px; }
  .creo i { font-size: 16px; line-height: 36px; color: #777; }
  .caption { font-size: 38px; line-height: 54px; margin-top: 8px; color: #4d5354; }
  .winbtns { display: flex; justify-content: flex-end; align-items: center; gap: 46px; padding-right: 30px; }

  .menu { height: 80px; display: flex; background: #3d4546; color: #fff; font-size: 41px; line-height: 82px; border-bottom: 3px solid #343b3c; }
  .file { width: 192px; text-align: center; height: 80px; background: linear-gradient(170deg, #67d444, #55a636); }
  .item { padding: 0 68px 0 65px; }
  .current { width: 285px; height: 84px; margin-left: 20px; padding-left: 62px; background: #f8f9fb; color: #5c5c5c; font-style: italic; }
  .tools { margin-left: auto; display: flex; align-items: center; padding-right: 23px; height: 74px; }
  .tools .up { width: 32px; height: 18px; margin: -14px 36px 0 0; }
  .tools .s30 { margin-right: 36px; }
  .tools .tri { margin: 4px 34px 0 24px; }
  .tools b { font-size: 38px; line-height: 40px; font-weight: 800; }

  .ribbon { height: 311px; display: flex; border-bottom: 4px solid #b8c4c4; }
  .feature { width: 157px; margin: 6px 3px 0 0; border-right: 2px solid #b6bbbc; padding: 104px 0 0 33px; height: 297px; }
  .dash { width: 2371px; display: flex; flex-direction: column; }
  .groups { height: 242px; display: flex; }
  .group { flex: none; position: relative; }
  .group h4 { margin: 0 0 14px; font-weight: 500; font-size: 35px; line-height: 39px; color: #3a3a3a; }
  .type { width: 337px; padding: 15px 0 0 32px; height: 227px; background: linear-gradient(#dcdde0, #dcdde0) right 0 top 16px / 2px 211px no-repeat; }
  .depth { width: 454px; padding: 15px 0 0 33px; background: linear-gradient(#dcdde0, #dcdde0) right 0 top 16px / 2px 211px no-repeat; }
  .settings {
    width: 725px; padding: 15px 0 0 34px;
    background: linear-gradient(#b6bbbc, #b6bbbc) right 0 top 5px / 2px 232px no-repeat,
      linear-gradient(#a9a9a9, #a9a9a9) 345px 68px / 2px 3px no-repeat,
      linear-gradient(#a9a9a9, #a9a9a9) 345px 132px / 2px 3px no-repeat;
  }
  .toggles { display: flex; gap: 2px; }
  .big { width: 125px; height: 162px; border-top: 7px solid #b0b0b0; display: flex; flex-direction: column; align-items: center; padding-top: 11px; }
  .big.on { border: 2px solid #7bd3ff; border-top-width: 7px; background: #d3f1ff; padding-top: 10px; }
  .big span { margin-top: 6px; }
  .big .s52 { height: 46px; }
  .combo { display: flex; height: 64px; width: 371px; border: 2px solid #adb0b2; background: #fff; }
  .kind { position: relative; width: 65px; padding: 12px 8px; background: #f6f7f8; border-right: 2px solid #adb0b2; }
  .value { width: 240px; display: flex; align-items: center; justify-content: space-between; padding: 0 8px 0 9px; font-size: 33px; border-right: 2px solid #adb0b2; }
  .flip { flex: 1; padding: 6px 7px; background: #f8f9fb; }
  .opt { display: flex; align-items: center; gap: 16px; }
  .off { color: #b3b4b5; }
  .closed { padding: 22px 0 0 14px; }
  .cut { gap: 15px; padding: 12px 0 0 8px; }
  .thick { gap: 15px; padding: 27px 0 0 10px; }
  .controls { width: 552px; display: flex; align-items: center; padding: 0 0 4px 61px; background: linear-gradient(#b6bbbc, #b6bbbc) right 0 top 5px / 2px 232px no-repeat; }
  .pause { display: flex; gap: 17px; padding-right: 43px; }
  .pause i { width: 24px; height: 62px; background: #424041; }
  .controls .no { margin-right: 27px; }
  .preview { width: 80px; height: 80px; margin: 0 22px 0 14px; border: 2px solid #b0b0b0; background: #dfe0e2; display: flex; align-items: center; justify-content: center; }
  .controls .glasses { width: 80px; height: 56px; margin-top: 6px; }
  .confirm { display: flex; padding: 38px 0 0 40px; gap: 23px; }
  .ok { width: 114px; height: 165px; border: 2px solid #70d0ff; background: #a2deff; display: flex; flex-direction: column; align-items: center; padding-top: 28px; color: #333; }
  .ok .check { width: 82px; height: 60px; }
  .ok span { margin-top: 20px; }
  .cancel { width: 66px; display: flex; flex-direction: column; align-items: center; padding-top: 40px; }
  .cancel .cross { width: 56px; height: 45px; }
  .cancel span { margin-top: 25px; }
  .panels { height: 65px; display: flex; gap: 2px; padding-left: 611px; background: #e9eaeb; line-height: 69px; }
  .tab { width: 203px; text-align: center; background: #dfe0e1; box-shadow: 0 0 0 2px #f6f7f8; clip-path: inset(0 -2px); }
  .tab.wide { width: 283px; }
  .helparea { width: 1715px; margin-top: 6px; height: 297px; border-left: 2px solid #b6bbbc; border-right: 2px solid #b6bbbc; display: flex; justify-content: flex-end; padding: 24px 33px 0 0; }
  .help { width: 767px; height: 250px; background: #e0e1e2; padding: 25px 0 0 20px; }
  .help p { margin: 0; line-height: 46px; }
  .help .more { margin-top: 18px; }
  .help a { color: #1b6fad; text-decoration: underline; text-decoration-thickness: 3px; text-underline-offset: 4px; }
  .datumcol { flex: 1; background: #f9f9f9; border-right: 2px solid #c4c8c9; display: flex; flex-direction: column; align-items: center; padding-top: 22px; }
  .sk { width: 78px; height: 78px; }
  .datumcol span { margin: 31px 0 63px; }

  .quick { height: 69px; display: flex; padding-left: 1px; background: #f8f9fb; border-bottom: 4px solid #b3c0c1; }
  .cell { width: 69px; display: flex; justify-content: center; align-items: center; }
  .cell.on { background: #e0e1e3; border: 2px solid #b4b6b7; border-top-color: #9a9c9d; }
  .drop { width: 37px; display: flex; justify-content: center; align-items: center; padding-right: 4px; }
  .overflow { border-left: 2px solid #b6bbbc; padding: 23px 0 0 22px; display: flex; flex-direction: column; align-items: center; gap: 2px; }
  .overflow .bar { width: 26px; height: 4px; background: #666; }
  .overflow .tri { border-width: 14px 11px 0; }

  main { height: 1704px; display: flex; }
  aside { width: 769px; display: flex; flex-direction: column; border-right: 7px solid #dae0df; }
  .tabs { height: 71px; display: flex; background: #dae0df; }
  .t { width: 90px; display: flex; justify-content: center; align-items: center; padding-right: 8px; }
  .t.first { background: #f8fafb; padding: 0 0 0 6px; }
  .body { flex: 1; background: #f8fafb; }
  .treebar { height: 80px; margin-top: 6px; display: flex; align-items: center; padding-left: 32px; }
  .treebar .wide { margin: 0 20px 0 30px; }
  .treebar > :global(svg:nth-child(2)) { margin-left: 12px; margin-right: -12px; }
  .tog { width: 68px; height: 68px; margin-left: 15px; border: 2px solid #b0b2b3; background: #e0e1e3; display: flex; align-items: center; justify-content: center; }
  .treebar .sep { width: 2px; height: 68px; background: #b6bbbc; margin: 0 24px 0 12px; }
  .treebar .pad { margin-right: 24px; }
  .treebar .s2 { margin: 0 24px 0 22px; }
  .treebar b { font: 600 46px/40px "Open Sans", sans-serif; margin: -10px 24px 0 0; width: 28px; }
  .treebar .p2 { margin-right: 49px; }
  .opts { position: relative; width: 50px; padding-bottom: 6px; padding-top: 6px; }
  .filter { height: 78px; display: flex; align-items: center; padding-left: 32px; margin-top: 5px; }
  .filter .fun { width: 46px; height: 45px; }
  .search { width: 543px; height: 78px; margin: 0 15px 0 9px; border: 3px solid #a7b6b8; background: #fff; display: flex; align-items: center; justify-content: flex-end; padding-right: 12px; }
  .filter > .tri { margin-right: 32px; }
  ul { list-style: none; margin: 13px 0 0; padding: 0; }
  li { height: 54.800px; display: flex; align-items: center; gap: 15px; font-size: 34px; }
  .l0 { padding-left: 32px; }
  .l1 { padding-left: 86px; } .l2 { padding-left: 143px; } .l3 { padding-left: 201px; }
  .twist { width: 0; height: 0; border: 13px solid transparent; border-top: 18px solid #8f8f8f; border-bottom: 0; margin: 0 6px 0 -46px; }
  .insert { height: 20px; margin: 11px 14px 0 30px; border: 5px solid #55c03a; border-width: 0 5px; background: linear-gradient(#5ec943, #5ec943) center / 100% 4px no-repeat; }
  .pending { height: 55px; margin-top: 10px; padding-left: 45px; display: flex; align-items: center; font-size: 35px; }
  .play { width: 0; height: 0; border: 13px solid transparent; border-left: 20px solid #858585; border-right: 0; margin-right: 22px; }
  .pending .s22 { margin: -22px 8px 0 13px; }

  .stage { position: relative; flex: 1; background: #e8eaee; }
  .scene { display: block; width: 3610px; height: 1704px; }
  .lbl { font: 48px "Liberation Sans", sans-serif; fill: #6f4149; }
  .lbl.one { fill: #fca404; stroke: #fca404; stroke-width: 1; }
  .lbl.y { fill: #22ff2c; } .lbl.z { fill: #22f6ff; } .lbl.x { fill: #ff2c2c; } .lbl.csys { fill: #6f4858; }
  .dim { font: 500 48px "Open Sans", sans-serif; fill: #2a0060; }
  .tol { font: 39px "Liberation Sans", sans-serif; fill: #949aa4; }
  .boxes { fill: none; stroke: #fcae6c; stroke-width: 2.500; }
  .ghost { stroke: #a28d92; stroke-width: 2; }
  .ghost.hot { stroke: #c0702e; stroke-width: 2.500; }
  .axis { stroke: #7dbfbf; stroke-width: 3; stroke-dasharray: 16 16; }
  .axis.warm { stroke: #a0a888; }
  .float { position: absolute; left: 1214px; top: 15px; width: 1181px; height: 86px; display: flex; align-items: center; padding-left: 8px; background: #f8f9fb; border: 2px solid #a5a7a8; }
  .vt { position: relative; width: 66px; height: 66px; margin-right: 7px; flex: none; display: flex; align-items: center; justify-content: center; }
  .vt.on { border: 2px solid #abadae; background: #dfe0e2; }
  .vt .corner { right: 2px; bottom: 3px; }

  footer { height: 96px; background: #f6fafb; border-top: 4px solid #b5c2c2; display: flex; align-items: center; padding-left: 15px; }
  .st { width: 68px; height: 68px; display: flex; align-items: center; justify-content: center; }
  .st.on { width: 60px; border: 2px solid #b0b2b3; background: #e0e1e3; margin-right: 5px; }
  .rule { width: 2px; height: 68px; background: #b6bbbc; margin: 0 7px 0 20px; }
  .msgarrow { width: 33px; height: 36px; margin: -13px 4px 0 0; }
  .msg { margin-top: -13px; width: 3141px; }
  .find { border-left: 2px solid #b6bbbc; border-right: 2px solid #b6bbbc; height: 72px; padding: 2px 4px 2px 17px; background: linear-gradient(#b6bbbc, #b6bbbc) 10px 0 / 2px 100% no-repeat; }
  .findbox { width: 118px; height: 68px; display: flex; border: 2px solid #c3c7c9; background: #fbfcfd; }
  .bin { width: 76px; padding: 9px 13px 9px 15px; border-right: 2px solid #c3c7c9; }
  .fa { flex: 1; display: flex; align-items: center; justify-content: center; }
  .select { margin-left: auto; margin-right: 47px; width: 495px; height: 64px; border: 2px solid #adafb0; background: #f8f9f9; display: flex; align-items: center; justify-content: space-between; padding-left: 20px; }
  .sa { width: 45px; height: 60px; border-left: 2px solid #adafb0; display: flex; align-items: center; justify-content: center; }

  .desktop { flex: 1; border-top: 3px solid #b0b6bc; background: linear-gradient(90deg, #e0ecf6 0%, #e0ebf8 18%, #d0e0fb 24%, #d6dcf5 32%, #d9dff0 56%, #d1def8 65%, #d8dcf0 74%, #e0ebf8 84%, #e2eef9 100%); padding-left: 2960px; }
  .desktop i { width: 107px; height: 10px; margin-top: 9px; background: #ecf1fb; border-radius: 8px 8px 0 0; }

  .mark { position: absolute; border: 10px solid #d12d3a; border-radius: 5px; }
  .depthmark { left: 506px; top: 142px; width: 404px; height: 156px; }
  .okmark { left: 2248px; top: 142px; width: 147px; height: 243px; }
</style>
